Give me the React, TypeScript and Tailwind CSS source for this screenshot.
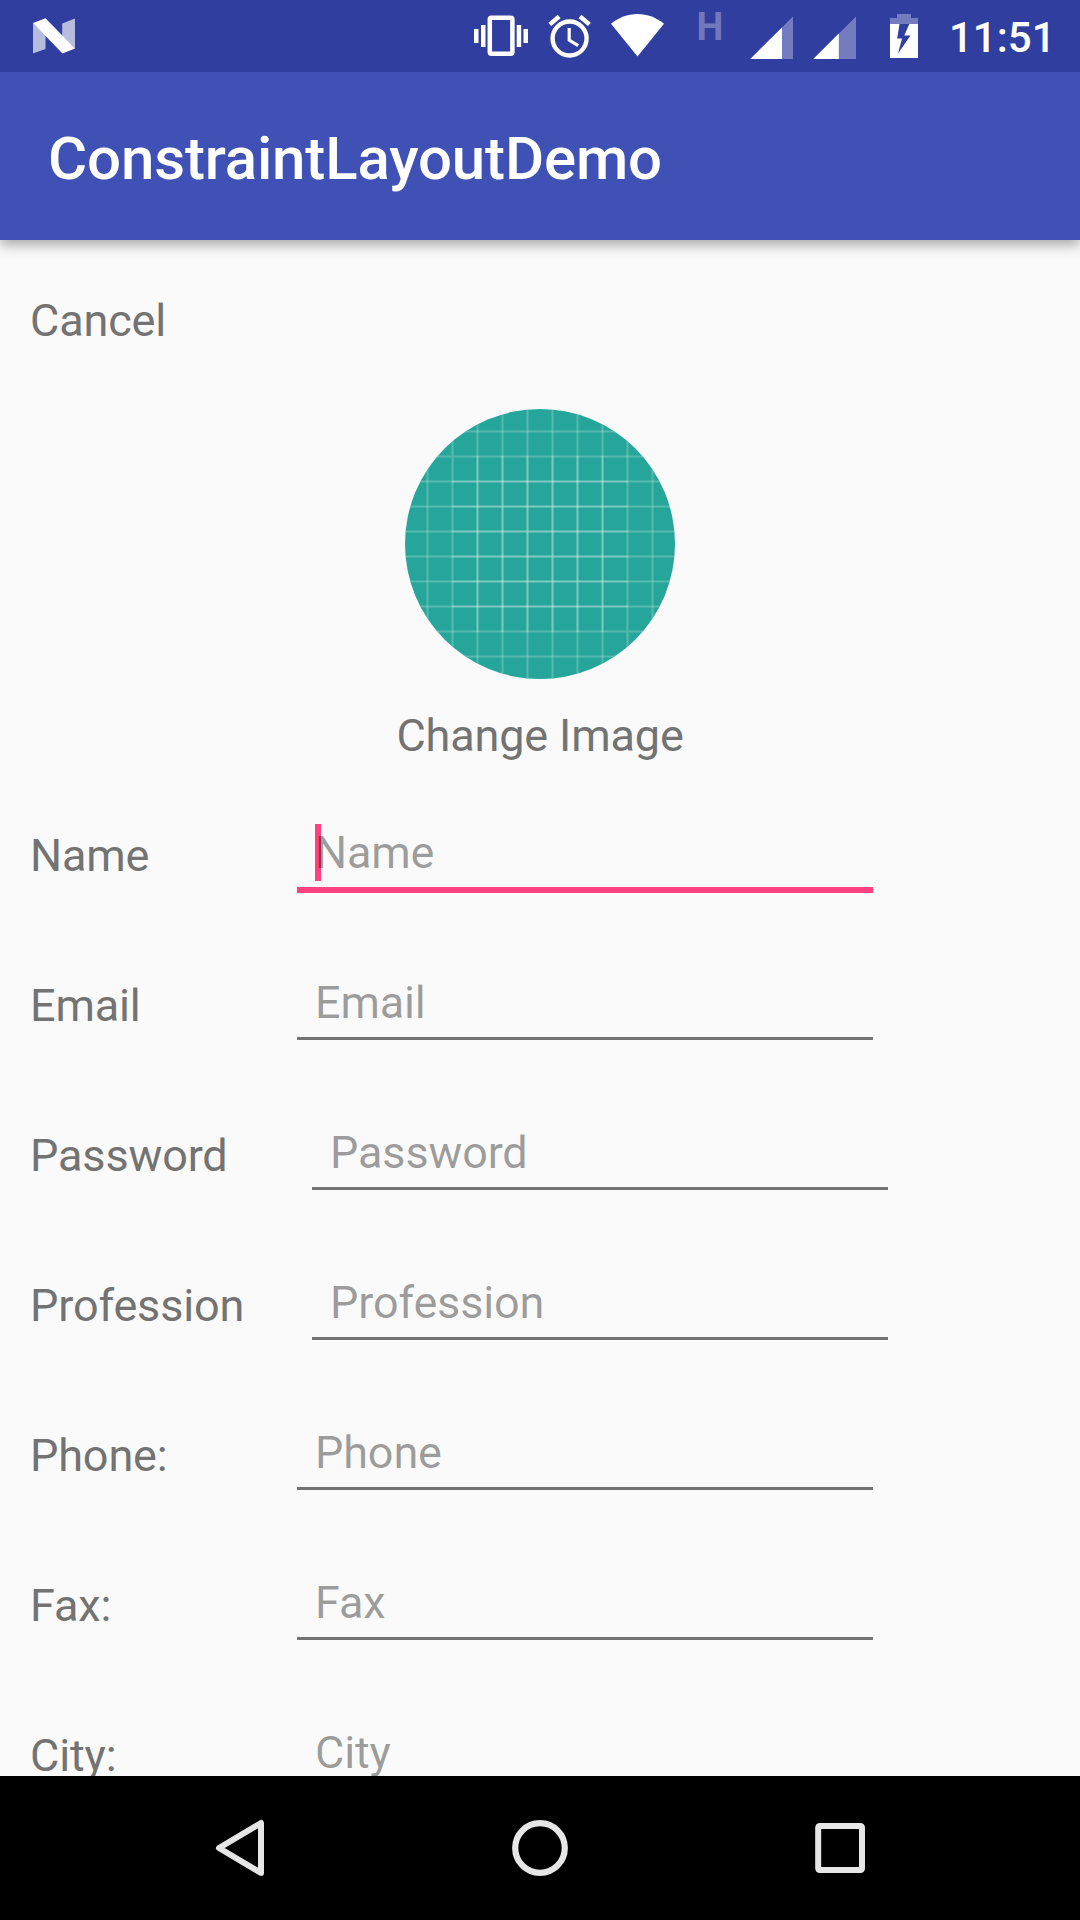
const fields = [
  { label: "Name", hint: "Name", focused: true },
  { label: "Email", hint: "Email" },
  { label: "Password", hint: "Password", inset: true },
  { label: "Profession", hint: "Profession", inset: true },
  { label: "Phone:", hint: "Phone" },
  { label: "Fax:", hint: "Fax" },
  { label: "City:", hint: "City" },
];

function StatusBar() {
  return (
    <div className="relative z-10 flex h-[72px] shrink-0 items-start bg-[#303f9f] text-white">
      <svg className="ml-8 mt-4 h-10 w-11 shrink-0" viewBox="32 16 44 40" fill="#fff">
        <path d="M33 23L45.5 35v14L33 53.5zM62.2 23.5L75 18.5v30L62.2 36z" opacity=".65" />
        <path d="M33 23l12.5-4.8L75 48.5l-12.5 5z" />
      </svg>
      <svg className="ml-[396px] mt-3 h-12 w-14 shrink-0" viewBox="472 12 56 48" fill="#fff">
        <path d="M474 29h4.5v14H474zM481 25h4.5v22H481zM516.7 25h4.5v22h-4.5zM523.5 29h4.5v14h-4.5z" />
        <rect x="489.8" y="17.8" width="22.6" height="36" rx="1.8" fill="none" stroke="#fff" strokeWidth="4.5" />
      </svg>
      <svg className="ml-5 mt-3 h-12 w-11 shrink-0" viewBox="548 12 44 48" fill="none" stroke="#fff">
        <circle cx="569.6" cy="38.5" r="17" strokeWidth="4.4" />
        <path d="M569.2 28v12.2l9 5.4" strokeWidth="3.2" />
        <path d="M549.8 24.4l9.4-7.9M580 16.5l9.4 7.9" strokeWidth="4.5" />
      </svg>
      <svg className="ml-[18px] mt-3 h-12 w-14 shrink-0" viewBox="610 12 56 48" fill="#fff">
        <path d="M637.5 56.5L611 23.8C618.5 17.6 627.5 14 637.5 14s19 3.6 26.5 9.8z" />
      </svg>
      <span className="ml-[30.5px] mt-[5px] w-[27px] text-[38px] font-bold leading-[44px] text-[#7179bb]">H</span>
      <svg className="ml-[25.5px] mt-3 h-12 w-12 shrink-0" viewBox="749 12 48 48" fill="#fff">
        <path d="M750.3 59H793V16.4z" opacity=".32" />
        <path d="M750.3 59H782V27.4z" />
      </svg>
      <svg className="ml-[15px] mt-3 h-12 w-12 shrink-0" viewBox="812 12 48 48" fill="#fff">
        <path d="M813.3 59H856V16.4z" opacity=".32" />
        <path d="M813.3 59H838.8V33.5z" />
      </svg>
      <svg className="ml-[28px] mt-3 h-12 w-8 shrink-0" viewBox="888 12 32 48" fill="#fff">
        <path d="M897 14h14v4h7v6h-28v-6h7z" opacity=".32" />
        <path fillRule="evenodd" d="M890 24h28v34h-28zM899.5 24l-2.3 14.5h4.8l-4 15 12.500-18h-6.200l5-11.500z" />
      </svg>
      <span className="ml-[29px] mt-[13px] text-[42px] font-medium leading-[50px]">11:51</span>
    </div>
  );
}

const lines = Array.from({ length: 10 }, (_, i) => i);
const innerLines = Array.from({ length: 6 }, (_, i) => i);
const innerColumns = Array.from({ length: 6 }, (_, i) => i);

function Avatar() {
  return (
    <svg className="size-[270px]" viewBox="405 409 270 270">
      <defs>
        <clipPath id="avatar">
          <circle cx="540" cy="544" r="135" />
        </clipPath>
      </defs>
      <g clipPath="url(#avatar)" stroke="#fff" strokeWidth="2">
        <rect x="405" y="409" width="270" height="270" fill="#26a69a" stroke="none" />
        <g strokeOpacity=".22">
          {lines.map((i) => (
            <path key={i} d={`M${427.5 + i * 25} 409v270M405 ${431.5 + i * 25}h270`} />
          ))}
        </g>
        <g strokeOpacity=".22">
          {innerColumns.map((i) => (
            <path key={i} d={`M${477.5 + i * 25} 456v176`} />
          ))}
          {innerLines.map((i) => (
            <path key={i} d={`M452 ${481.5 + i * 25}h176`} />
          ))}
        </g>
      </g>
    </svg>
  );
}

function Field({ label, hint, focused, inset }: { label: string; hint: string; focused?: boolean; inset?: boolean }) {
  return (
    <label className="flex h-[150px] shrink-0 items-start pl-[30px]">
      <span className="mt-[3px] w-[267px] shrink-0">{label}</span>
      <span className={inset ? "relative ml-[15px] block w-[576px]" : "relative block w-[576px]"}>
        {focused && <span className="absolute left-[18px] top-px h-[57px] w-1.5 bg-[#ff4081]" />}
        <input
          className={
            focused
              ? "relative block h-[70px] w-full border-b-[6px] border-[#ff4081] bg-transparent px-[18px] pb-1.5 text-[45px] leading-[60px] tracking-[-0.15px] outline-none placeholder:text-black/38"
              : "relative block h-[67px] w-full border-b-[3px] border-[#737373] bg-transparent px-[18px] pb-1.5 text-[45px] leading-[60px] tracking-[-0.15px] outline-none placeholder:text-black/38"
          }
          placeholder={hint}
        />
      </span>
    </label>
  );
}

export default function App() {
  return (
    <div className="flex h-[1920px] w-[1080px] flex-col overflow-hidden bg-[#fafafa] font-['Roboto',sans-serif]">
      <StatusBar />
      <header className="relative flex h-[168px] shrink-0 items-center bg-[#3f51b5] pl-12 text-[60px] font-medium leading-[72px] tracking-[-0.15px] text-white shadow-[0_5px_12px_rgba(0,0,0,0.33)]">
        <h1 className="mt-[6px]">ConstraintLayoutDemo</h1>
      </header>
      <main className="flex min-h-0 flex-1 flex-col overflow-hidden text-[45px] leading-[60px] tracking-[-0.15px] text-[#737373]">
        <p className="mt-[51px] pl-[30px]">Cancel</p>
        <div className="mt-[58px] flex shrink-0 flex-col items-center">
          <Avatar />
          <p className="mt-[27px]">Change Image</p>
        </div>
        <div className="mt-[57px] flex flex-col">
          {fields.map((f) => (
            <Field key={f.label} {...f} />
          ))}
        </div>
      </main>
      <nav className="flex h-36 shrink-0 items-center justify-center gap-[240px] bg-black">
        <svg className="size-[60px]" viewBox="210 1818 60 60" fill="none" stroke="#e6e6e6" strokeWidth="6" strokeLinejoin="round">
          <path d="M219 1848l42-25v50z" />
        </svg>
        <svg className="size-[60px]" viewBox="510 1818 60 60" fill="none" stroke="#e6e6e6" strokeWidth="6.2">
          <circle cx="540" cy="1848" r="24.8" />
        </svg>
        <svg className="size-[60px]" viewBox="810 1818 60 60" fill="none" stroke="#e6e6e6" strokeWidth="6">
          <rect x="818.2" y="1826" width="43.8" height="44" rx="1.5" />
        </svg>
      </nav>
    </div>
  );
}
